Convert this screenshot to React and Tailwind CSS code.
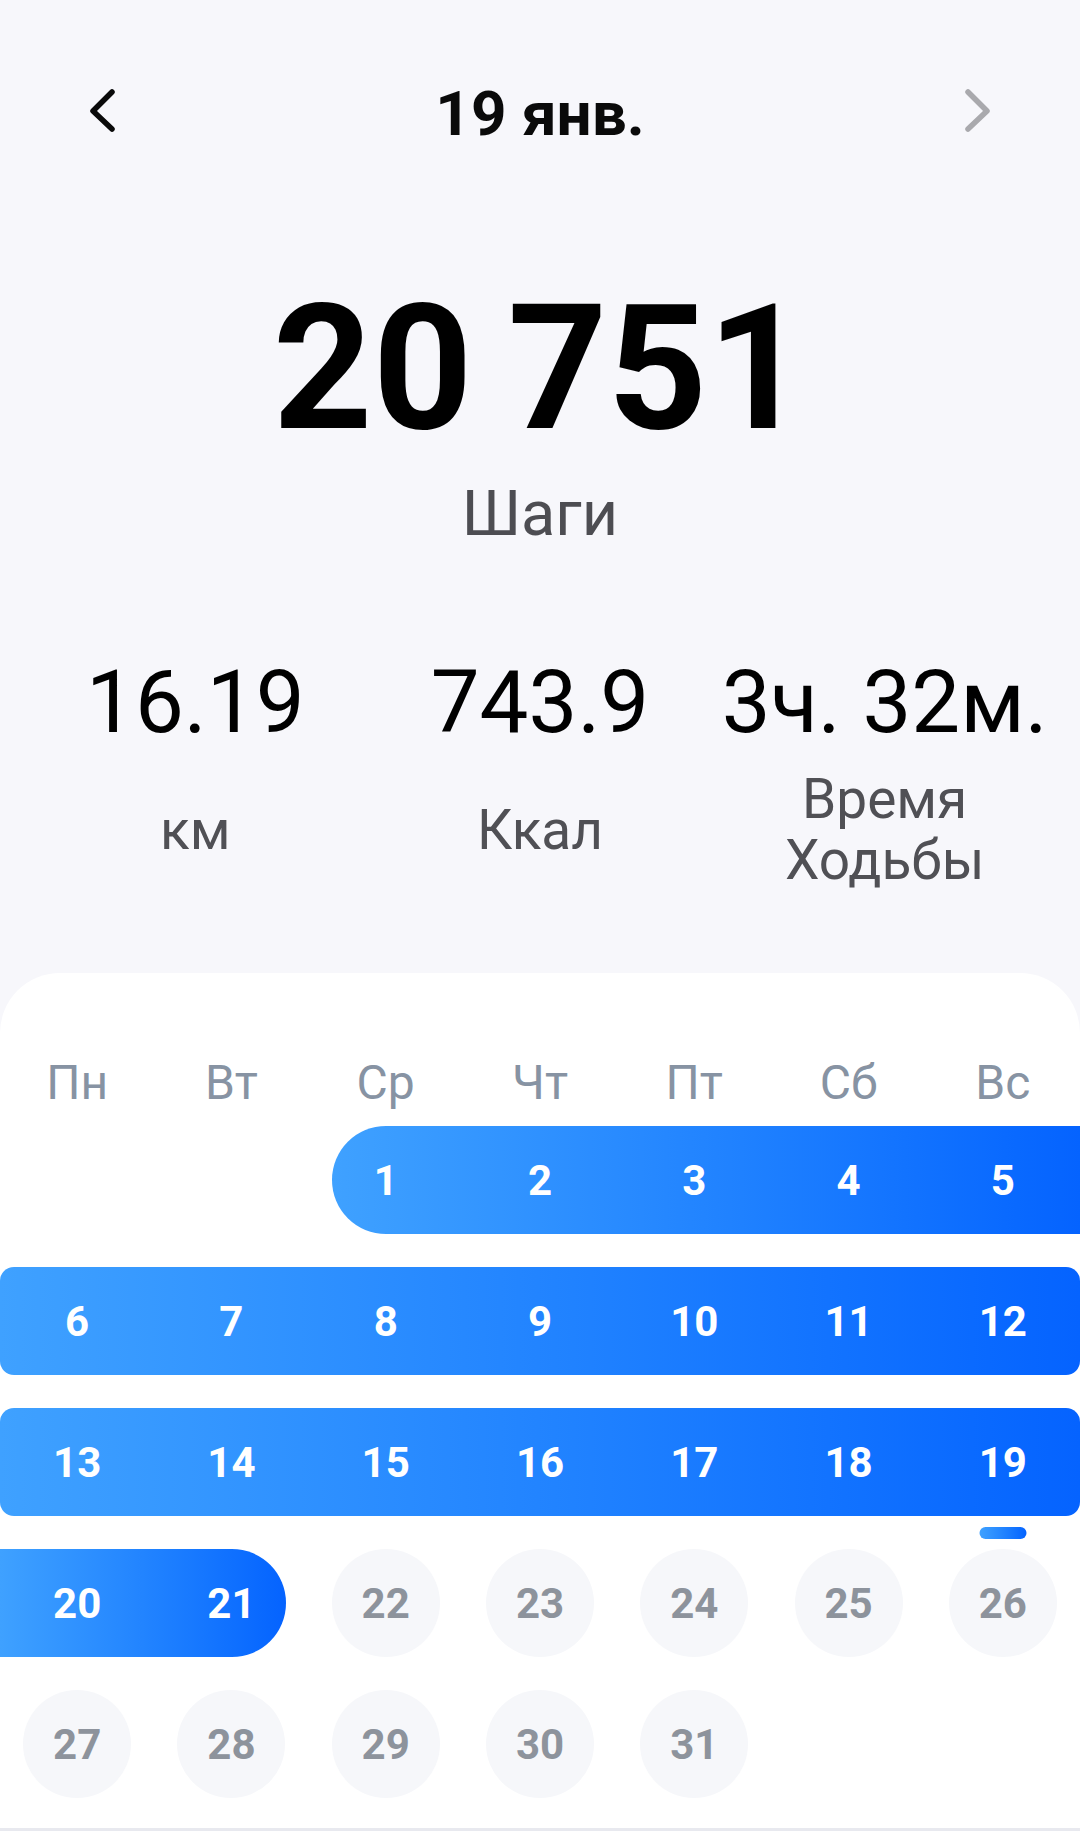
import React from "react";

const weekdays = ["Пн", "Вт", "Ср", "Чт", "Пт", "Сб", "Вс"];

const colStart = [
  "col-start-1",
  "col-start-2",
  "col-start-3",
  "col-start-4",
  "col-start-5",
  "col-start-6",
  "col-start-7",
];

// each week: days per column, and the class of the selected bar (if any)
const weeks = [
  {
    days: [null, null, 1, 2, 3, 4, 5],
    bar: "col-start-3 col-end-8 ml-[23px] rounded-l-full rounded-r-[14px]",
  },
  {
    days: [6, 7, 8, 9, 10, 11, 12],
    bar: "col-start-1 col-end-8 rounded-[14px]",
  },
  {
    days: [13, 14, 15, 16, 17, 18, 19],
    bar: "col-start-1 col-end-8 rounded-[14px]",
  },
  {
    days: [20, 21, 22, 23, 24, 25, 26],
    bar: "col-start-1 col-end-3 mr-[23px] rounded-l-[14px] rounded-r-full",
  },
  {
    days: [27, 28, 29, 30, 31, null, null],
    bar: null,
  },
];

const TODAY = 21;
const CURRENT = 19;

function Chevron({ dir, color }) {
  const pts = dir === "left" ? "24,4 5,23 24,41" : "6,4 25,23 6,41";
  return (
    <svg width="30" height="46" viewBox="0 0 30 46" className="mt-[5px]">
      <polyline
        points={pts}
        fill="none"
        stroke={color}
        strokeWidth="5.5"
        strokeLinecap="round"
        strokeLinejoin="round"
      />
    </svg>
  );
}

function Stat({ value, label }) {
  return (
    <div className="flex flex-col items-center">
      <div className="text-[87px] leading-none text-black whitespace-nowrap">{value}</div>
      <div className="mt-[23px] h-[122px] flex items-center justify-center text-center text-[55px] leading-[61px] text-[#505055]">
        {label}
      </div>
    </div>
  );
}

export default function App() {
  return (
    <div className="min-h-[1831px] w-full flex flex-col bg-[#f7f7fb] font-[Roboto,sans-serif]">
      <div className="pt-[83px] px-[88px] flex items-start justify-between">
        <Chevron dir="left" color="#0a0a0a" />
        <div className="flex-1 text-center text-[62px] leading-none font-bold text-[#0a0a0a]">
          19 янв.
        </div>
        <Chevron dir="right" color="#a9a9ad" />
      </div>

      <div className="mt-[137px] text-center text-[174px] leading-none font-bold text-black [word-spacing:-8px]">
        20 751
      </div>
      <div className="mt-[26px] text-center text-[63px] leading-none text-[#4d4d52]">
        Шаги
      </div>

      <div className="mt-[114px] px-[23px] grid grid-cols-3">
        <Stat value="16.19" label="км" />
        <Stat value="743.9" label="Ккал" />
        <Stat
          value="3ч. 32м."
          label={
            <span>
              Время
              <br />
              Ходьбы
            </span>
          }
        />
      </div>

      <div className="mt-[82px] flex-1 bg-white rounded-t-[60px] pt-[86px]">
        <div className="grid grid-cols-7">
          {weekdays.map((d) => (
            <div key={d} className="text-center text-[48px] leading-none text-[#8793a3]">
              {d}
            </div>
          ))}
        </div>

        <div className="mt-[19px] flex flex-col gap-[33px]">
          {weeks.map((w, wi) => (
            <div key={wi} className="grid grid-cols-7 h-[108px]">
              {w.bar && (
                <div
                  className={`row-start-1 h-[108px] bg-linear-to-r from-[#3fa1ff] to-[#0563ff] ${w.bar}`}
                />
              )}
              {w.days.map((d, i) =>
                d === null ? null : (
                  <div
                    key={d}
                    className={`relative row-start-1 ${colStart[i]} flex items-center justify-center`}
                  >
                    {d <= TODAY ? (
                      <span className="text-[42px] font-bold text-white">{d}</span>
                    ) : (
                      <span className="w-[108px] h-[108px] rounded-full bg-[#f6f7fa] flex items-center justify-center text-[42px] font-bold text-[#8d939c]">
                        {d}
                      </span>
                    )}
                    {d === CURRENT && (
                      <span className="absolute left-1/2 -translate-x-1/2 top-[119px] w-[47px] h-[12px] rounded-full bg-linear-to-r from-[#3fa1ff] to-[#0563ff]" />
                    )}
                  </div>
                )
              )}
            </div>
          ))}
        </div>
      </div>
      <div className="h-[3px] bg-[#e8e9ef]" />
    </div>
  );
}
